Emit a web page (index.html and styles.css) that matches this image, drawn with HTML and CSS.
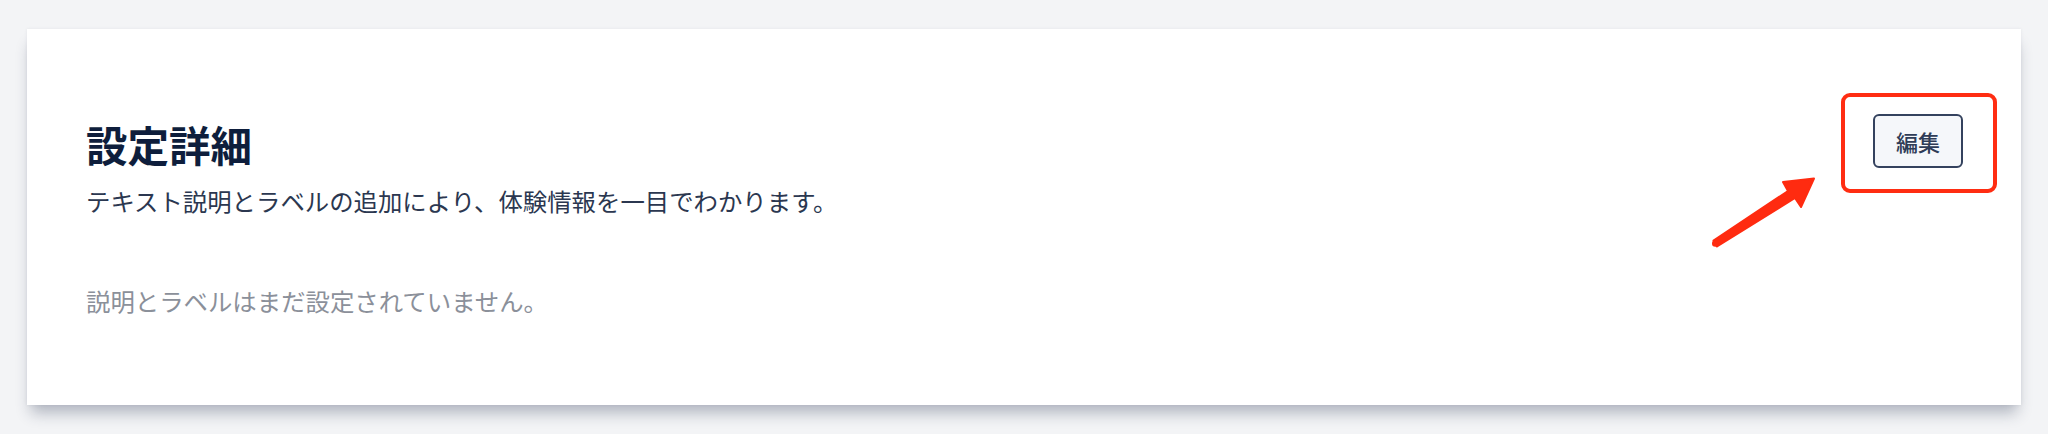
FILE: index.html
```html
<!DOCTYPE html>
<html lang="ja">
<head>
<meta charset="utf-8">
<title>設定詳細</title>
<link rel="stylesheet" href="styles.css">
</head>
<body>
<main class="page">
  <section class="card">
    <div class="header">
      <div class="heading">
        <h1 class="title">設定詳細</h1>
        <p class="subtitle">テキスト説明とラベルの追加により、体験情報を一目でわかります。</p>
      </div>
      <div class="action">
        <button class="edit-btn" type="button">編集</button>
        <span class="highlight"></span>
      </div>
    </div>
    <p class="empty">説明とラベルはまだ設定されていません。</p>
    <svg class="arrow" width="130" height="95" viewBox="0 0 130 95" aria-hidden="true">
      <polygon points="13.5,80.5 88,31 83,22 114,18.5 101,47 95,38 17,86.5" fill="#ff2b10" stroke="#ff2b10" stroke-width="2" stroke-linejoin="round"/>
      <circle cx="15.3" cy="83.5" r="3.3" fill="#ff2b10"/>
    </svg>
  </section>
</main>
</body>
</html>
```
FILE: styles.css
```css
* { box-sizing: border-box; }
html, body { margin: 0; padding: 0; }
body {
  background: #f3f4f6;
  font-family: "Noto Sans CJK JP", "Noto Sans", sans-serif;
  width: 2048px;
  height: 434px;
  overflow: hidden;
}
.page {
  padding: 29px 27px 0 27px;
}
.card {
  position: relative;
  background: #ffffff;
  height: 376px;
  padding: 85px 58px 0 59px;
  box-shadow: 0 12px 14px -4px rgba(40, 52, 80, 0.32), 0 0 3px rgba(40, 52, 80, 0.08);
}
.header {
  display: flex;
  justify-content: space-between;
  align-items: flex-start;
}
.title {
  margin: 0;
  font-size: 41.5px;
  line-height: 60px;
  font-weight: 700;
  color: #0e1e3c;
}
.subtitle {
  margin: 9px 0 0 0;
  font-size: 24.4px;
  line-height: 36px;
  color: #2b3750;
}
.action {
  position: relative;
}
.edit-btn {
  font-family: inherit;
  font-size: 22px;
  line-height: 30px;
  padding: 10px 21px;
  border: 2px solid #34425e;
  border-radius: 6px;
  background: #f5f7fa;
  color: #2f3c57;
  font-weight: 500;
  display: block;
}
.highlight {
  position: absolute;
  top: -21px;
  left: -32px;
  right: -34px;
  bottom: -25px;
  border: 4px solid #ff2d12;
  border-radius: 9px;
}
.empty {
  margin: 64px 0 0 0;
  font-size: 24.4px;
  line-height: 36px;
  color: #8b909a;
}
.arrow {
  position: absolute;
  left: 1673px;
  top: 131px;
}
```
